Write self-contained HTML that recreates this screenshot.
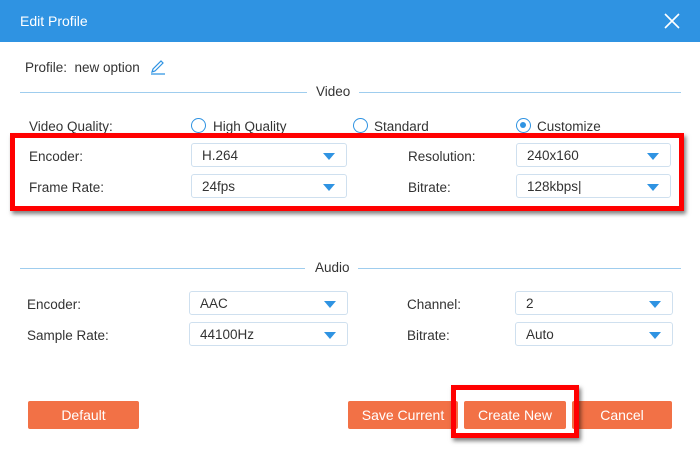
<!DOCTYPE html>
<html><head><style>
body{margin:0;width:700px;height:451px;background:#fff;font-family:"Liberation Sans",sans-serif;font-size:13.5px;color:#333;position:relative;overflow:hidden}
.a{position:absolute;white-space:nowrap}
.hdr{position:absolute;left:0;top:0;width:700px;height:42px;background:#2f93e2;color:#fff;font-size:14px}
.sel{position:absolute;height:24px;border:1px solid #cfe0ef;border-radius:3px;box-sizing:border-box;background:#fff;line-height:23px;padding-left:10px}
.sel:after{content:"";position:absolute;right:11px;top:9px;border-left:6px solid transparent;border-right:6px solid transparent;border-top:7px solid #2f93e2}
.line{position:absolute;height:1px;background:#9fcdee}
.btn{position:absolute;top:401px;height:28px;background:#f27146;color:#fff;border-radius:2px;text-align:center;line-height:28px;font-size:14px}
.rad{position:absolute;width:15px;height:15px;border:1.5px solid #2f93e2;border-radius:50%;box-sizing:border-box;background:#fff}
.red{position:absolute;border:5px solid #f00;box-shadow:2px 3px 4px rgba(0,0,0,.5)}
</style></head><body>
<div class="hdr"><span class="a" style="left:20px;top:13px">Edit Profile</span>
<svg class="a" style="left:664px;top:13px" width="16" height="16"><path d="M1 1L15 15M15 1L1 15" stroke="#fff" stroke-width="1.6"/></svg></div>
<span class="a" style="left:25px;top:60px">Profile:&nbsp; new option</span>
<svg class="a" style="left:150px;top:59px" width="16" height="16"><path d="M2 13L3 10L11 2L13 4L5 12Z M1 15H15" stroke="#2f93e2" fill="none" stroke-width="1.2"/></svg>
<div class="line" style="left:20px;top:92px;width:287px"></div>
<span class="a" style="left:316px;top:84px">Video</span>
<div class="line" style="left:359px;top:92px;width:322px"></div>
<span class="a" style="left:29px;top:119px">Video Quality:</span>
<div class="rad" style="left:191px;top:118px"></div><span class="a" style="left:213px;top:119px">High Quality</span>
<div class="rad" style="left:353px;top:118px"></div><span class="a" style="left:374px;top:119px">Standard</span>
<div class="rad" style="left:516px;top:118px"><div style="position:absolute;left:3px;top:3px;width:6px;height:6px;border-radius:50%;background:#2f93e2"></div></div><span class="a" style="left:537px;top:119px">Customize</span>
<span class="a" style="left:29px;top:149px">Encoder:</span>
<div class="sel" style="left:191px;top:143px;width:156px">H.264</div>
<span class="a" style="left:408px;top:149px">Resolution:</span>
<div class="sel" style="left:516px;top:143px;width:155px">240x160</div>
<span class="a" style="left:29px;top:180px">Frame Rate:</span>
<div class="sel" style="left:191px;top:174px;width:156px">24fps</div>
<span class="a" style="left:408px;top:180px">Bitrate:</span>
<div class="sel" style="left:516px;top:174px;width:155px">128kbps|</div>
<div class="red" style="left:10px;top:133px;width:664px;height:68px"></div>
<div class="line" style="left:20px;top:268px;width:285px"></div>
<span class="a" style="left:315px;top:260px">Audio</span>
<div class="line" style="left:358px;top:268px;width:323px"></div>
<span class="a" style="left:27px;top:297px">Encoder:</span>
<div class="sel" style="left:189px;top:291px;width:159px">AAC</div>
<span class="a" style="left:407px;top:297px">Channel:</span>
<div class="sel" style="left:515px;top:291px;width:158px">2</div>
<span class="a" style="left:27px;top:328px">Sample Rate:</span>
<div class="sel" style="left:189px;top:322px;width:159px">44100Hz</div>
<span class="a" style="left:407px;top:328px">Bitrate:</span>
<div class="sel" style="left:515px;top:322px;width:158px">Auto</div>
<div class="btn" style="left:28px;width:111px">Default</div>
<div class="btn" style="left:348px;width:110px">Save Current</div>
<div class="btn" style="left:464px;width:102px">Create New</div>
<div class="btn" style="left:572px;width:100px">Cancel</div>
<div class="red" style="left:451px;top:385px;width:118px;height:43px"></div>
</body></html>
